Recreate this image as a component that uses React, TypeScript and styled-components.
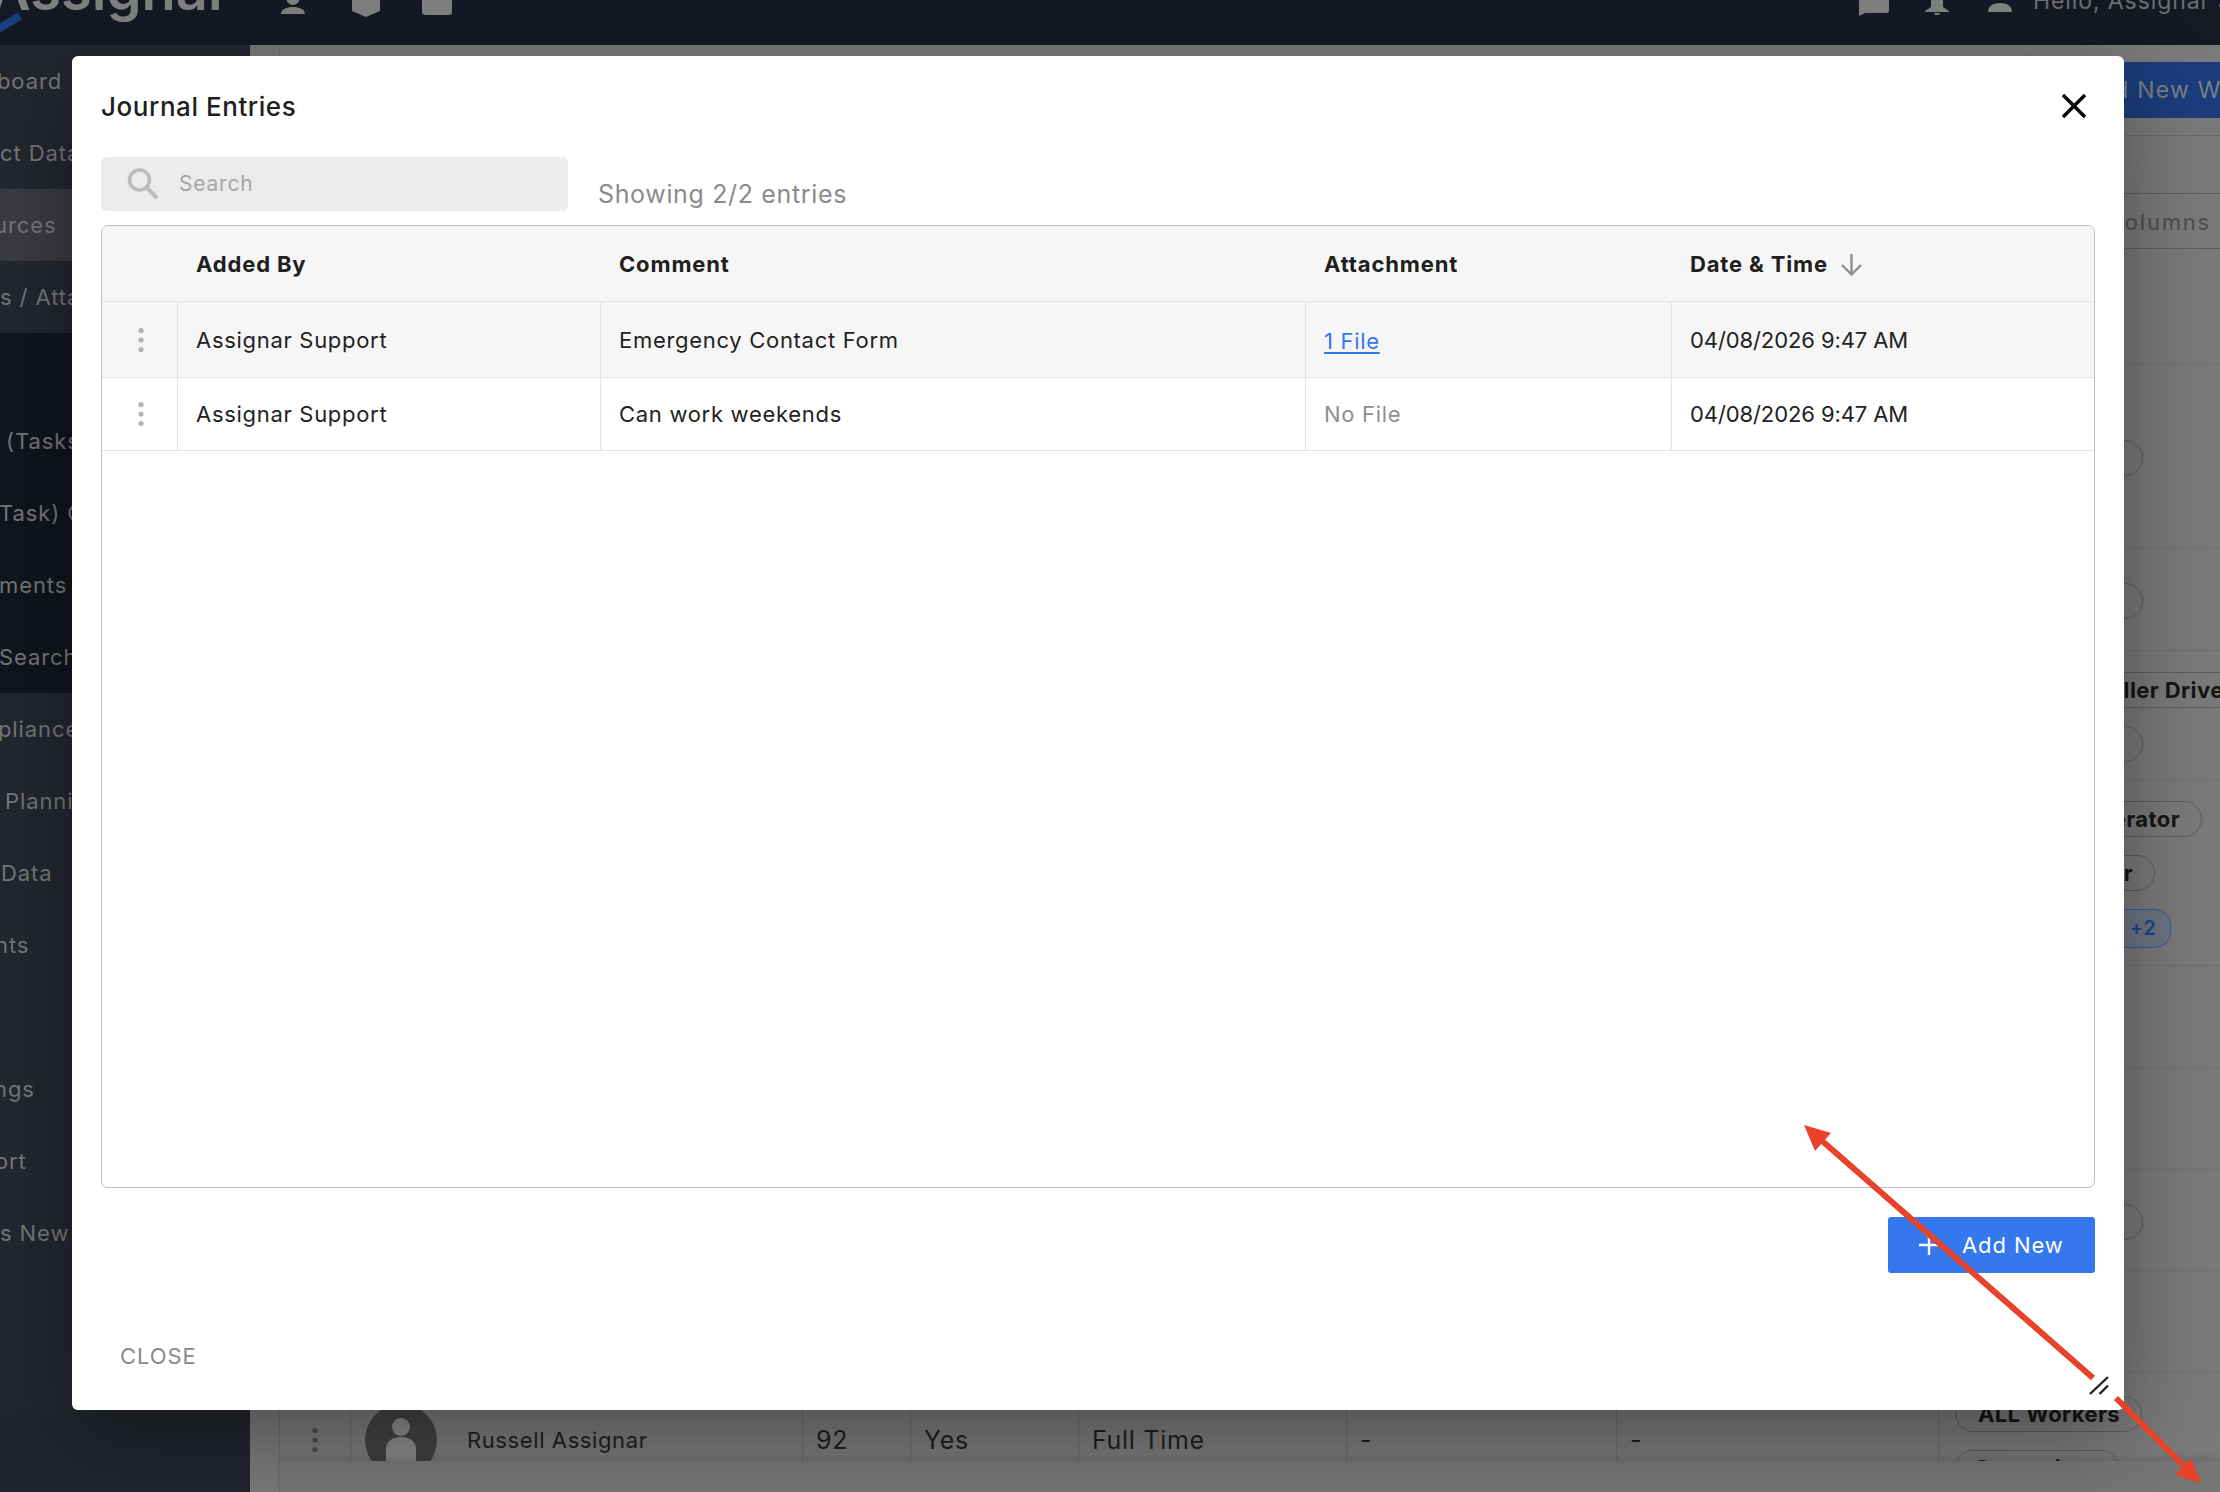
import React from "react";
import styled, { createGlobalStyle } from "styled-components";

const FONT = `"Inter", "Liberation Sans", sans-serif`;

const Global = createGlobalStyle`
  html, body { margin: 0; padding: 0; width: 2220px; height: 1492px; overflow: hidden; background: #787878; }
  * { box-sizing: border-box; }
  body { font-family: ${FONT}; }
`;

const Page = styled.div`
  position: relative;
  width: 2220px;
  height: 1492px;
  overflow: hidden;
  display: flex;
  flex-direction: column;
`;

/* ---------- dimmed app behind the dialog ---------- */
const TopBar = styled.header`
  height: 45px;
  flex: none;
  background: #141923;
  display: flex;
  justify-content: space-between;
  overflow: hidden;
  color: #7f7f7f;
`;
const TopGroup = styled.div`
  display: flex;
  align-items: flex-start;
`;
const Logo = styled.div`
  position: relative;
  width: 281px;
  height: 45px;
`;
const LogoWord = styled.div`
  margin: -50px 0 0 -10px;
  font-size: 56px;
  line-height: 80px;
  font-weight: 600;
  color: #808080;
  white-space: nowrap;
`;
const Swoosh = styled.svg`
  position: absolute;
  left: 0;
  top: 12px;
`;
const TopIcon = styled.svg<{ $gap: number }>`
  margin-right: ${(p) => p.$gap}px;
  flex: none;
  display: block;
`;
const Hello = styled.div`
  width: 187px;
  margin-top: -17px;
  font-size: 23px;
  line-height: 36px;
  letter-spacing: 0.9px;
  color: #6f6f6f;
  white-space: nowrap;
  overflow: hidden;
`;
const Body = styled.div`
  flex: 1;
  min-height: 0;
  display: flex;
`;
const Sidebar = styled.nav`
  width: 250px;
  flex: none;
  overflow: hidden;
  background: #22252d;
`;
const NavItem = styled.div<{ $tone: "base" | "active" | "deep"; $indent: number }>`
  height: 72px;
  padding-left: ${(p) => Math.max(p.$indent, 0)}px;
  display: flex;
  align-items: center;
  overflow: hidden;
  font-size: 22px;
  letter-spacing: 0.9px;
  white-space: nowrap;
  color: #777;
  background: ${(p) => (p.$tone === "active" ? "#3b3c42" : p.$tone === "deep" ? "#12151d" : "#24272f")};
  & > span { margin-left: ${(p) => Math.min(p.$indent, 0)}px; }
`;
const Main = styled.main`
  flex: 1;
  min-width: 0;
  background: #7a7a7a;
  padding-left: 29px;
  display: flex;
  flex-direction: column;
`;
const Scroll = styled.div`
  flex: 1;
  min-height: 0;
  overflow: hidden;
  border-left: 1px solid #6e6e6e;
`;
const ActionBar = styled.div`
  height: 91px;
  padding-top: 17px;
  display: flex;
  justify-content: flex-end;
  border-bottom: 1px solid #6a6a6a;
`;
const AddWorker = styled.div`
  width: 400px;
  height: 56px;
  background: #1b3d7c;
  color: #7a7f88;
  font-size: 23px;
  letter-spacing: 1.2px;
  line-height: 56px;
  padding-left: 262px;
  white-space: nowrap;
  overflow: hidden;
`;
const Spacer = styled.div`
  height: 58px;
  border-bottom: 1px solid #5f5f5f;
`;
const ColumnsRow = styled.div`
  height: 55px;
  border-bottom: 1px solid #5f5f5f;
  display: flex;
  justify-content: flex-end;
  align-items: center;
  padding: 2px 9px 0 0;
  font-size: 22px;
  letter-spacing: 1.8px;
  color: #4d4d4d;
`;
const Row = styled.div<{ $h: number }>`
  height: ${(p) => p.$h}px;
  flex: none;
  border-bottom: 1px solid #707070;
  display: grid;
  grid-template-columns: 71px 452px 108px 168px 268px 270px 322px 1fr;
  align-items: stretch;
`;
const Cell = styled.div`
  display: flex;
  align-items: center;
  border-right: 1px solid #6a6a6a;
  padding-left: 13px;
  font-size: 25px;
  letter-spacing: 0.7px;
  color: #1f1f1f;
  white-space: nowrap;
`;
const NameCell = styled(Cell)`
  padding-left: 14px;
  gap: 30px;
  font-size: 22px;
  letter-spacing: 0.6px;
`;
const DotCell = styled(Cell)`
  justify-content: center;
  padding-left: 0;
`;
const Avatar = styled.div`
  width: 72px;
  height: 72px;
  flex: none;
  border-radius: 50%;
  background: #424242;
  display: flex;
  align-items: center;
  justify-content: center;
`;
const ChipCell = styled.div`
  grid-column: 8;
  display: flex;
  flex-direction: column;
  justify-content: center;
  align-items: flex-start;
  gap: 18px;
  padding: 3px 0 0 16px;
  white-space: nowrap;
`;
const Chip = styled.div<{ $w: number; $blue?: boolean; $tall?: boolean }>`
  width: ${(p) => p.$w}px;
  height: ${(p) => (p.$tall ? 39 : 36)}px;
  flex: none;
  border-radius: ${(p) => (p.$tall ? 16 : 18)}px;
  border: 1px solid ${(p) => (p.$blue ? "#2f5cab" : "#5e5e5e")};
  background: ${(p) => (p.$blue ? "#6d7483" : "transparent")};
  color: ${(p) => (p.$blue ? "#1f448e" : "#151515")};
  font-size: ${(p) => (p.$blue ? 20 : 22)}px;
  font-weight: ${(p) => (p.$blue ? 600 : 700)};
  letter-spacing: 0.4px;
  line-height: ${(p) => (p.$blue ? 37 : 34)}px;
  text-align: right;
  padding-right: ${(p) => (p.$blue ? 14 : 21)}px;
`;
const FooterBar = styled.div`
  height: 31px;
  flex: none;
  background: #767676;
  border-left: 1px solid #6e6e6e;
  box-shadow: 0 -3px 6px rgba(0, 0, 0, 0.12);
  position: relative;
`;

/* ---------- dialog ---------- */
const Dialog = styled.section`
  position: absolute;
  left: 72px;
  top: 56px;
  width: 2052px;
  height: 1354px;
  background: #fff;
  border-radius: 6px;
  box-shadow: 0 24px 90px rgba(0, 0, 0, 0.38);
  padding: 0 29px;
  display: flex;
  flex-direction: column;
`;
const DialogHead = styled.div`
  height: 101px;
  flex: none;
  display: flex;
  align-items: center;
  justify-content: space-between;
  padding-bottom: 1px;
`;
const Title = styled.h2`
  margin: 0;
  font-size: 26px;
  font-weight: 500;
  letter-spacing: 0.55px;
  color: #1e1e1e;
`;
const CloseX = styled.svg`
  margin-right: 8px;
  display: block;
`;
const Toolbar = styled.div`
  height: 54px;
  flex: none;
  display: flex;
  align-items: flex-end;
  gap: 30px;
`;
const SearchBox = styled.div`
  width: 467px;
  height: 54px;
  border-radius: 6px;
  background: #ebebeb;
  display: flex;
  align-items: center;
  padding: 0 0 1px 26px;
  gap: 20px;
  font-size: 21px;
  letter-spacing: 0.8px;
  color: #a6a6a6;
`;
const Count = styled.div`
  font-size: 25px;
  line-height: 34px;
  letter-spacing: 0.65px;
  color: #8b8b8b;
`;
const Table = styled.div`
  margin-top: 14px;
  flex: none;
  height: 963px;
  border: 1px solid #bdbdbd;
  border-radius: 7px;
  overflow: hidden;
`;
const GridRow = styled.div<{ $h: number; $shade?: boolean }>`
  height: ${(p) => p.$h}px;
  display: grid;
  grid-template-columns: 76px 423px 705px 366px 1fr;
  background: ${(p) => (p.$shade ? "#f6f6f6" : "#fff")};
  border-bottom: 1px solid #e4e4e4;
`;
const HeadCell = styled.div`
  display: flex;
  align-items: center;
  gap: 12px;
  padding: 1px 0 0 18px;
  font-size: 22px;
  font-weight: 700;
  letter-spacing: 0.85px;
  color: #202020;
`;
const TCell = styled.div<{ $tight?: boolean }>`
  display: flex;
  align-items: center;
  padding-left: 18px;
  font-size: 22px;
  letter-spacing: ${(p) => (p.$tight ? -0.1 : 0.7)}px;
  color: #222;
  border-right: 1px solid #e4e4e4;
  &:last-child { border-right: 0; }
`;
const KebabCell = styled(TCell)`
  justify-content: center;
  padding-left: 2px;
`;
const FileLink = styled.a`
  color: #3578ef;
  text-decoration: underline;
  text-underline-offset: 3px;
  padding-top: 2px;
`;
const NoFile = styled.span`
  color: #8e8e8e;
`;
const Actions = styled.div`
  margin-top: 29px;
  flex: none;
  display: flex;
  justify-content: flex-end;
`;
const AddButton = styled.button`
  width: 207px;
  height: 56px;
  border: 0;
  border-radius: 3px;
  background: #3578ee;
  color: #fff;
  display: flex;
  align-items: center;
  gap: 22px;
  padding: 0 0 0 30px;
  font-family: ${FONT};
  font-size: 22px;
  letter-spacing: 0.9px;
`;
const Foot = styled.div`
  margin-top: 57px;
  padding-left: 19px;
  font-size: 22px;
  letter-spacing: 0.9px;
  line-height: 52px;
  color: #8a8a8a;
`;
const Annotation = styled.svg`
  position: absolute;
  left: 0;
  top: 0;
  pointer-events: none;
`;

const Dots = ({ color }: { color: string }) => (
  <svg width="6" height="26" viewBox="0 0 6 26">
    <circle cx="3" cy="3.5" r="2.6" fill={color} />
    <circle cx="3" cy="13" r="2.6" fill={color} />
    <circle cx="3" cy="22.5" r="2.6" fill={color} />
  </svg>
);

const nav: { t: string; tone: "base" | "active" | "deep"; indent: number }[] = [
  { t: "board", tone: "base", indent: -3 },
  { t: "ct Data", tone: "base", indent: 0 },
  { t: "urces", tone: "active", indent: -6 },
  { t: "s / Attachments", tone: "base", indent: 0 },
  { t: "", tone: "deep", indent: 0 },
  { t: "(Tasks)", tone: "deep", indent: 6 },
  { t: "Task) Codes", tone: "deep", indent: -1 },
  { t: "ments", tone: "deep", indent: -1 },
  { t: "Search", tone: "deep", indent: -1 },
  { t: "pliance", tone: "base", indent: -2 },
  { t: "Planning", tone: "base", indent: 5 },
  { t: "Data", tone: "base", indent: 1 },
  { t: "nts", tone: "base", indent: -5 },
  { t: "", tone: "base", indent: 0 },
  { t: "ngs", tone: "base", indent: -6 },
  { t: "ort", tone: "base", indent: -5 },
  { t: "s New", tone: "base", indent: 0 },
  { t: "", tone: "base", indent: 0 },
  { t: "", tone: "base", indent: 0 },
];

const entries = [
  { by: "Assignar Support", comment: "Emergency Contact Form", file: "1 File", when: "04/08/2026 9:47 AM", h: 76, shade: true },
  { by: "Assignar Support", comment: "Can work weekends", file: "", when: "04/08/2026 9:47 AM", h: 73, shade: false },
];

export default function App() {
  return (
    <Page>
      <Global />
      <TopBar>
        <TopGroup>
          <Logo>
            <LogoWord>Assignar</LogoWord>
            <Swoosh width="24" height="20" viewBox="0 0 24 20">
              <path d="M-2 17 L20 4" stroke="#1c3f80" strokeWidth="8" fill="none" />
            </Swoosh>
          </Logo>
          <TopIcon $gap={47} width="24" height="15" viewBox="0 0 24 15" fill="#808080">
            <path d="M12 -8a6.500 6.500 0 0 1 0 13a6.500 6.500 0 0 1 0 -13zM0 14c0-5 6-7 12-7s12 2 12 7z" />
          </TopIcon>
          <TopIcon $gap={42} width="28" height="18" viewBox="0 0 28 18" fill="#808080">
            <path d="M0 -4h28v15l-14 6l-14-6z" />
          </TopIcon>
          <TopIcon $gap={0} width="30" height="16" viewBox="0 0 30 16" fill="#808080">
            <path d="M0 -4h30v16a3 3 0 0 1-3 3h-24a3 3 0 0 1-3-3z" />
          </TopIcon>
        </TopGroup>
        <TopGroup>
          <TopIcon $gap={36} width="30" height="16" viewBox="0 0 30 16" fill="#808080">
            <path d="M0 -6h30v17a2 2 0 0 1-2 2h-22l-6 3z" />
          </TopIcon>
          <TopIcon $gap={39} width="24" height="16" viewBox="0 0 24 16" fill="#808080">
            <path d="M6 -6h12v13l6 4v1h-24v-1l6-4z" />
            <path d="M9 13h6a3 2 0 0 1-6 0z" />
          </TopIcon>
          <TopIcon $gap={21} width="24" height="12" viewBox="0 0 24 12" fill="#808080">
            <path d="M0 12c0-6 5-9 12-9s12 3 12 9z" />
          </TopIcon>
          <Hello>Hello, Assignar Support</Hello>
        </TopGroup>
      </TopBar>

      <Body>
        <Sidebar>
          {nav.map((n, i) => (
            <NavItem key={i} $tone={n.tone} $indent={n.indent}>
              <span>{n.t}</span>
            </NavItem>
          ))}
        </Sidebar>
        <Main>
          <Scroll>
            <ActionBar>
              <AddWorker>Add New Worker</AddWorker>
            </ActionBar>
            <Spacer />
            <ColumnsRow>Columns</ColumnsRow>
            <Row $h={116} />
            <Row $h={184}>
              <ChipCell>
                <Chip $w={188} />
              </ChipCell>
            </Row>
            <Row $h={102}>
              <ChipCell>
                <Chip $w={188} />
              </ChipCell>
            </Row>
            <Row $h={130}>
              <ChipCell>
                <Chip $w={300}>Roller Driver</Chip>
                <Chip $w={188} />
              </ChipCell>
            </Row>
            <Row $h={185}>
              <ChipCell>
                <Chip $w={247}>Operator</Chip>
                <Chip $w={200}>Labourer</Chip>
                <Chip $w={216} $blue $tall>+2</Chip>
              </ChipCell>
            </Row>
            <Row $h={102} />
            <Row $h={102} />
            <Row $h={101}>
              <ChipCell>
                <Chip $w={188} />
              </ChipCell>
            </Row>
            <Row $h={102} />
            <Row $h={134}>
              <DotCell>
                <Dots color="#4c4c4c" />
              </DotCell>
              <NameCell>
                <Avatar>
                  <svg width="34" height="46" viewBox="0 0 34 46" fill="#8a8a8a">
                    <circle cx="17" cy="10" r="9" />
                    <path d="M2 46V32c0-8 7-12 15-12s15 4 15 12v14z" />
                  </svg>
                </Avatar>
                Russell Assignar
              </NameCell>
              <Cell>92</Cell>
              <Cell>Yes</Cell>
              <Cell>Full Time</Cell>
              <Cell>-</Cell>
              <Cell>-</Cell>
              <ChipCell>
                <Chip $w={187}>ALL Workers</Chip>
                <Chip $w={164}>Supervisor</Chip>
              </ChipCell>
            </Row>
          </Scroll>
          <FooterBar />
        </Main>
      </Body>

      <Dialog role="dialog" aria-label="Journal Entries">
        <DialogHead>
          <Title>Journal Entries</Title>
          <CloseX width="26" height="26" viewBox="0 0 26 26">
            <path d="M2 2L24 24M24 2L2 24" stroke="#000" strokeWidth="3.4" />
          </CloseX>
        </DialogHead>
        <Toolbar>
          <SearchBox>
            <svg width="32" height="32" viewBox="0 0 32 32" fill="none" stroke="#bcbcbc" strokeWidth="3.6">
              <circle cx="12.5" cy="12" r="10" />
              <path d="M19.5 19.5L30 30" strokeWidth="4" />
            </svg>
            Search
          </SearchBox>
          <Count>Showing 2/2 entries</Count>
        </Toolbar>
        <Table>
          <GridRow $h={76} $shade>
            <HeadCell />
            <HeadCell>Added By</HeadCell>
            <HeadCell>Comment</HeadCell>
            <HeadCell>Attachment</HeadCell>
            <HeadCell>
              Date &amp; Time
              <svg width="23" height="23" viewBox="0 0 23 23" fill="none" stroke="#8f8f8f" strokeWidth="2.4">
                <path d="M11.500 1V21M2 12L11.500 21.500L21 12" />
              </svg>
            </HeadCell>
          </GridRow>
          {entries.map((e, i) => (
            <GridRow key={i} $h={e.h} $shade={e.shade}>
              <KebabCell>
                <Dots color="#b4b4b4" />
              </KebabCell>
              <TCell>{e.by}</TCell>
              <TCell>{e.comment}</TCell>
              <TCell>{e.file ? <FileLink href="#">{e.file}</FileLink> : <NoFile>No File</NoFile>}</TCell>
              <TCell $tight>{e.when}</TCell>
            </GridRow>
          ))}
        </Table>
        <Actions>
          <AddButton>
            <svg width="22" height="22" viewBox="0 0 22 22" stroke="#fff" strokeWidth="2.4">
              <path d="M11 1V21M1 11H21" />
            </svg>
            Add New
          </AddButton>
        </Actions>
        <Foot>CLOSE</Foot>
      </Dialog>

      <Annotation width="2220" height="1492" viewBox="0 0 2220 1492">
        <path d="M2090 1394L2108 1377M2099.500 1394L2108 1385.500" stroke="#222" strokeWidth="2.4" fill="none" />
        <path d="M1820 1139L2093 1378M2116 1398L2187 1469" stroke="#e8432a" strokeWidth="6" fill="none" />
        <path d="M1804 1125L1831 1133L1815 1151Z M2201 1483L2175 1475L2191 1458Z" fill="#e8432a" />
      </Annotation>
    </Page>
  );
}
